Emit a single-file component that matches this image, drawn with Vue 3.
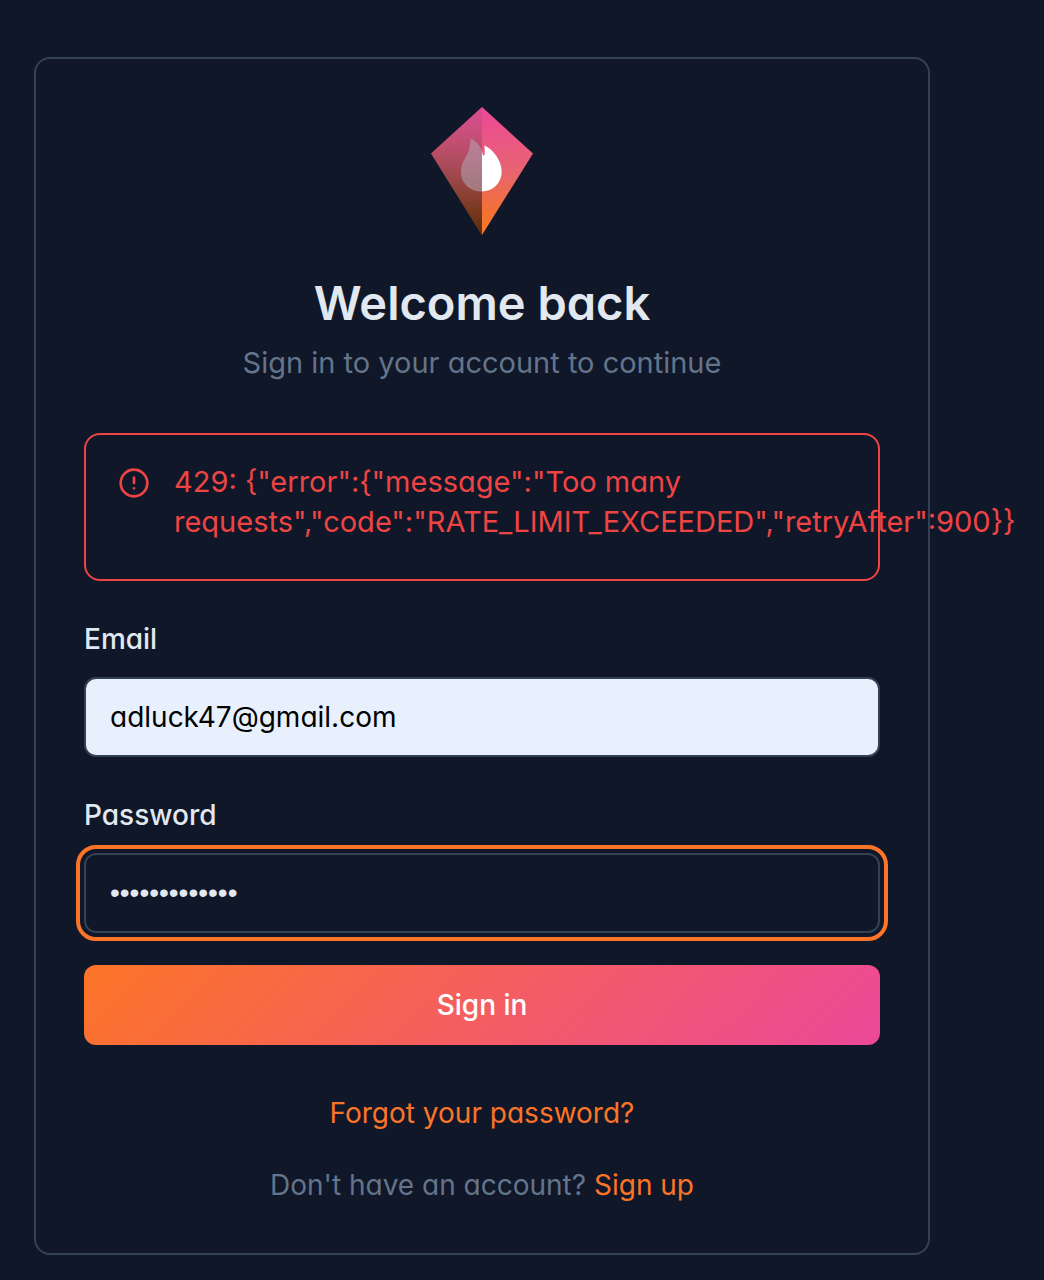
<script setup>
import { ref } from 'vue'

const email = ref('adluck47@gmail.com')
const password = ref('password12345')
const error = ref('429: {"error":{"message":"Too many requests","code":"RATE_LIMIT_EXCEEDED","retryAfter":900}}')
</script>

<template>
  <main class="page">
    <section class="card">
      <header class="header">
        <svg class="logo" viewBox="0 0 102 128" aria-hidden="true">
          <defs>
            <linearGradient id="kite" x1="0" y1="0" x2="0" y2="1">
              <stop offset="0" stop-color="#ec4899" />
              <stop offset="0.5" stop-color="#e86470" />
              <stop offset="0.8" stop-color="#f37038" />
              <stop offset="1" stop-color="#fa7a24" />
            </linearGradient>
            <linearGradient id="shade" x1="0" y1="0" x2="0" y2="1">
              <stop offset="0" stop-color="#7c5c64" stop-opacity="0.15" />
              <stop offset="0.5" stop-color="#281820" stop-opacity="0.36" />
              <stop offset="1" stop-color="#000000" stop-opacity="0.65" />
            </linearGradient>
            <clipPath id="left"><path d="M0 0H51V128H0Z" /></clipPath>
            <clipPath id="right"><path d="M51 0H102V128H51Z" /></clipPath>
            <path
              id="flame"
              d="M39.5 31.5C45 34 49.5 38.5 51 44.5L52 48.2C52.3 49 53.5 48.6 53.6 47.5C53.9 44.5 53.8 41.5 53.2 38.5C60 41 70.7 52 70.7 64.5C70.7 76.5 61.5 84.5 50.5 84.5C39 84.5 30 76.5 30 64.5C30 52 39.8 48.5 39.5 31.5Z"
            />
          </defs>
          <path d="M51 0 102 46.5 51 128 0 46.5Z" fill="url(#kite)" />
          <path d="M51 0V128L0 46.5Z" fill="url(#shade)" />
          <use href="#flame" clip-path="url(#right)" fill="#fff" />
          <use href="#flame" clip-path="url(#left)" fill="#b4b0c0" fill-opacity="0.5" />
        </svg>
        <h1>Welcome back</h1>
        <p>Sign in to your account to continue</p>
      </header>

      <div class="alert" role="alert">
        <svg class="alert-icon" viewBox="0 0 24 24" aria-hidden="true">
          <circle cx="12" cy="12" r="10" />
          <path d="M12 8v4M12 16h.01" />
        </svg>
        <p>{{ error }}</p>
      </div>

      <form @submit.prevent>
        <label for="email">Email</label>
        <input id="email" v-model="email" class="filled" type="email" />
        <label for="password" class="next">Password</label>
        <input id="password" v-model="password" class="focused" type="password" />
        <button type="submit">Sign in</button>
      </form>

      <footer class="links">
        <a href="#forgot">Forgot your password?</a>
        <p>Don't have an account? <a href="#signup">Sign up</a></p>
      </footer>
    </section>
  </main>
</template>

<style>
body {
  background: #101728;
}
</style>

<style scoped>
.page {
  padding: 57px 114px 25px 34px;
  font-family: Inter, sans-serif;
  font-feature-settings: "cv11";
  font-size: 28px;
  line-height: 40px;
  color: #e2e8f0;
}
.card {
  padding: 48px;
  border: 2px solid #334155;
  border-radius: 16px;
}
.header {
  display: flex;
  flex-direction: column;
  align-items: center;
  text-align: center;
}
.logo {
  width: 102px;
  height: 128px;
}
h1,
p {
  margin: 0;
}
h1 {
  margin-top: 36px;
  font-size: 47px;
  font-weight: 600;
  line-height: 64px;
}
.header p {
  margin-top: 8px;
  font-size: 29px;
  color: #64748b;
}
.alert {
  display: flex;
  gap: 24px;
  margin-top: 50px;
  padding: 27px 32px 37px;
  border: 2px solid #ef4444;
  border-radius: 16px;
  color: #ef4444;
}
.alert p {
  flex: 1;
  min-width: 0;
  font-size: 29px;
}
.alert-icon {
  flex: none;
  width: 32px;
  height: 32px;
  margin-top: 5px;
  fill: none;
  stroke: currentColor;
  stroke-width: 2;
  stroke-linecap: round;
}
form {
  display: flex;
  flex-direction: column;
  margin-top: 32px;
}
label {
  margin-bottom: 12px;
  font-weight: 500;
  line-height: 52px;
}
.next {
  margin-top: 32px;
}
input,
button {
  box-sizing: border-box;
  width: 100%;
  height: 80px;
  border-radius: 12px;
  font: inherit;
  font-feature-settings: inherit;
}
input {
  padding: 0 24px;
  border: 2px solid #334155;
  background: transparent;
  color: #e2e8f0;
}
.filled {
  background: #e8f0fe;
  color: #000;
}
.focused {
  font-family: "Liberation Sans", Arial, sans-serif;
  outline: 4px solid #fc7427;
  outline-offset: 4px;
}
button {
  margin-top: 32px;
  border: 0;
  background: linear-gradient(135deg, #fc7427, #ec4899);
  color: #fff;
  font-weight: 500;
}
.links {
  display: flex;
  flex-direction: column;
  align-items: center;
  gap: 32px;
  margin-top: 48px;
}
.links p {
  color: #64748b;
}
a {
  color: #fc7427;
  text-decoration: none;
}
</style>
